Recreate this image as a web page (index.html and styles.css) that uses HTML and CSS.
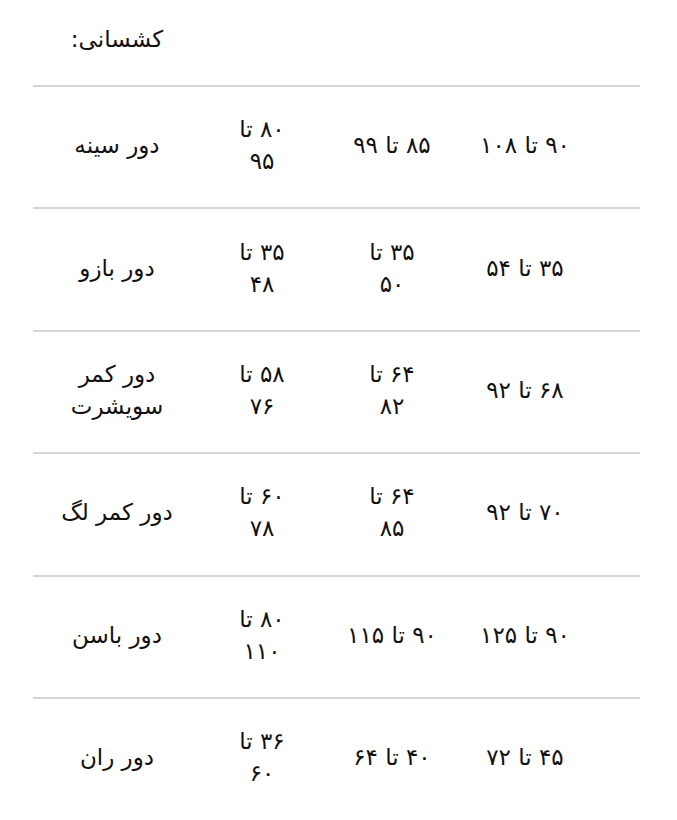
FILE: index.html
```html
<!DOCTYPE html>
<html lang="fa">
<head>
<meta charset="utf-8">
<title>کشسانی</title>
<link rel="stylesheet" href="styles.css">
</head>
<body>
<div class="sheet">
  <div class="row head">
    <div class="cell">کشسانی:</div>
    <div class="cell"></div>
    <div class="cell"></div>
    <div class="cell"></div>
  </div>
  <div class="row">
    <div class="cell">دور سینه</div>
    <div class="cell">۸۰ تا<br>۹۵</div>
    <div class="cell">۸۵ تا ۹۹</div>
    <div class="cell">۹۰ تا ۱۰۸</div>
  </div>
  <div class="row">
    <div class="cell">دور بازو</div>
    <div class="cell">۳۵ تا<br>۴۸</div>
    <div class="cell">۳۵ تا<br>۵۰</div>
    <div class="cell">۳۵ تا ۵۴</div>
  </div>
  <div class="row">
    <div class="cell">دور کمر<br>سویشرت</div>
    <div class="cell">۵۸ تا<br>۷۶</div>
    <div class="cell">۶۴ تا<br>۸۲</div>
    <div class="cell">۶۸ تا ۹۲</div>
  </div>
  <div class="row">
    <div class="cell">دور کمر لگ</div>
    <div class="cell">۶۰ تا<br>۷۸</div>
    <div class="cell">۶۴ تا<br>۸۵</div>
    <div class="cell">۷۰ تا ۹۲</div>
  </div>
  <div class="row">
    <div class="cell">دور باسن</div>
    <div class="cell">۸۰ تا<br>۱۱۰</div>
    <div class="cell">۹۰ تا ۱۱۵</div>
    <div class="cell">۹۰ تا ۱۲۵</div>
  </div>
  <div class="row">
    <div class="cell">دور ران</div>
    <div class="cell">۳۶ تا<br>۶۰</div>
    <div class="cell">۴۰ تا ۶۴</div>
    <div class="cell">۴۵ تا ۷۲</div>
  </div>
</div>
</body>
</html>
```
FILE: styles.css
```css
html, body {
  margin: 0;
  padding: 0;
  background: #ffffff;
}
body {
  font-family: "DejaVu Sans", sans-serif;
  color: #111111;
}
.sheet {
  margin-left: 33px;
  width: 607px;
}
.row {
  display: grid;
  grid-template-columns: 168px 122px 138px 128px 1fr;
  align-items: center;
  height: 120.4px;
  border-top: 2px solid #d4d4d4;
}
.row.head {
  height: 85px;
  border-top: none;
  align-items: start;
}
.cell {
  text-align: center;
  direction: rtl;
  font-size: 23px;
  line-height: 32px;
  white-space: nowrap;
  padding-bottom: 4px;
}
.head .cell {
  padding-top: 23px;
  padding-bottom: 0;
}
```
